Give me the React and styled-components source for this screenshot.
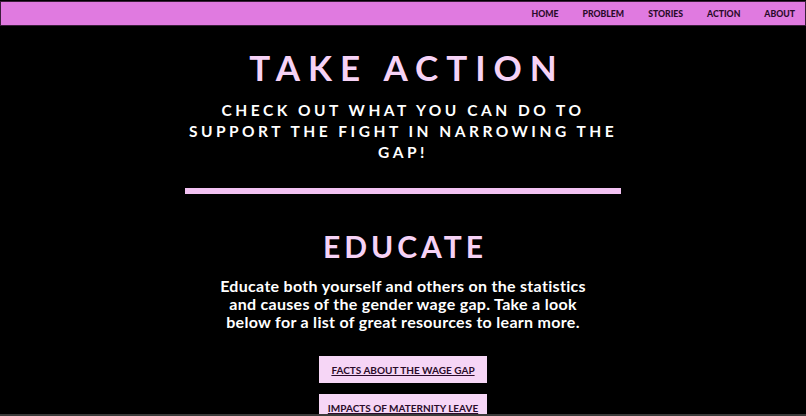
import React from 'react';
import styled, { createGlobalStyle } from 'styled-components';

const GlobalStyle = createGlobalStyle`
  html, body {
    margin: 0;
    padding: 0;
    background: #000;
  }
  body {
    font-family: 'Lato', 'Noto Sans', sans-serif;
    height: 416px;
    overflow: hidden;
    box-sizing: border-box;
    border-bottom: 2px solid #3a3a3a;
  }
`;

const Nav = styled.nav`
  display: flex;
  justify-content: flex-end;
  align-items: center;
  gap: 24px;
  height: 23px;
  margin: 1px 0 0;
  padding: 0 10px 0 0;
  background: #e07ae0;
  border: 1px solid #3b1d3b;
`;

const NavLink = styled.a`
  font-size: 8.7px;
  font-weight: 900;
  color: #2a0b2a;
  text-decoration: none;
`;

const Main = styled.main`
  display: flex;
  flex-direction: column;
  align-items: center;
  padding-top: 21px;
`;

const Title = styled.h1`
  margin: 0;
  font-size: 35px;
  font-weight: 700;
  letter-spacing: 8px;
  line-height: 40px;
  color: #f6d2f6;
  padding-left: 8px;
`;

const Subtitle = styled.h2`
  margin: 13px 0 0;
  width: 440px;
  text-align: center;
  font-size: 15.5px;
  font-weight: 700;
  letter-spacing: 3.5px;
  line-height: 21px;
  color: #fff;
`;

const Divider = styled.hr`
  width: 436px;
  height: 6px;
  margin: 25px 0 0;
  border: none;
  background: #f2c2f2;
`;

const SectionTitle = styled.h2`
  margin: 35px 0 0;
  font-size: 30px;
  font-weight: 700;
  letter-spacing: 4px;
  line-height: 34px;
  color: #f6d2f6;
  padding-left: 4px;
`;

const Text = styled.p`
  margin: 14px 0 0;
  width: 372px;
  text-align: center;
  font-size: 16px;
  font-weight: 700;
  letter-spacing: 0.3px;
  line-height: 18px;
  color: #fff;
`;

const Buttons = styled.div`
  display: flex;
  flex-direction: column;
  align-items: center;
  gap: 11px;
  margin-top: 25px;
`;

const ResourceButton = styled.a`
  display: flex;
  align-items: center;
  justify-content: center;
  width: 168px;
  height: 27px;
  background: #f6d6f6;
  color: #2a0b2a;
  font-size: 10px;
  font-weight: 700;
  text-decoration: underline;
`;

export default function App() {
  const links = ['HOME', 'PROBLEM', 'STORIES', 'ACTION', 'ABOUT'];

  return (
    <>
      <GlobalStyle />
      <Nav>
        {links.map((l) => (
          <NavLink key={l} href='#'>
            {l}
          </NavLink>
        ))}
      </Nav>
      <Main>
        <Title>TAKE ACTION</Title>
        <Subtitle>CHECK OUT WHAT YOU CAN DO TO SUPPORT THE FIGHT IN NARROWING THE GAP!</Subtitle>
        <Divider />
        <SectionTitle>EDUCATE</SectionTitle>
        <Text>
          Educate both yourself and others on the statistics and causes of the gender wage gap. Take a
          look below for a list of great resources to learn more.
        </Text>
        <Buttons>
          <ResourceButton href='#'>FACTS ABOUT THE WAGE GAP</ResourceButton>
          <ResourceButton href='#'>IMPACTS OF MATERNITY LEAVE</ResourceButton>
        </Buttons>
      </Main>
    </>
  );
}
